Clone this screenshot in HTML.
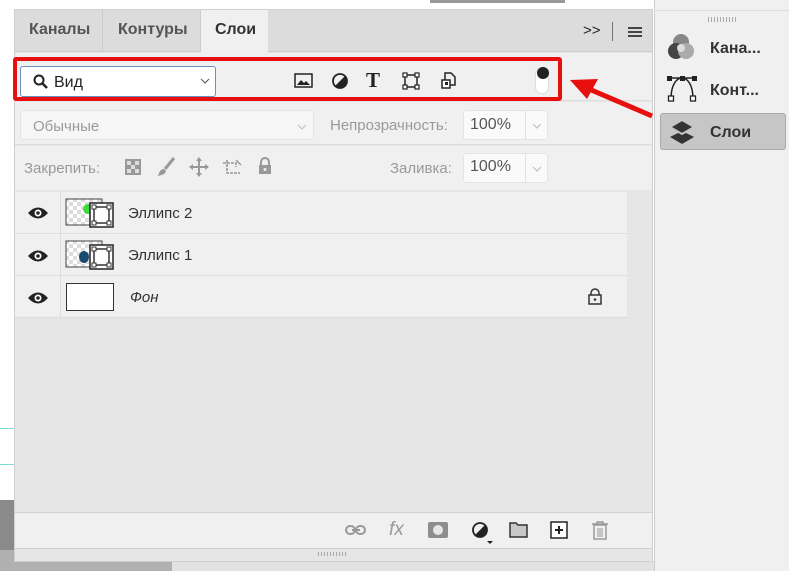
<!DOCTYPE html>
<html><head><meta charset="utf-8"><style>
*{margin:0;padding:0;box-sizing:border-box}
body{width:789px;height:571px;overflow:hidden;background:#fff;font-family:"Liberation Sans",sans-serif;position:relative}
.a{position:absolute}
.t{font-size:15px;color:#333}
.g{color:#9a9a9a;font-size:15px}
</style></head><body>
<div class="a" style="left:0;top:500px;width:14px;height:50px;background:#8a8a8a"></div>
<div class="a" style="left:0;top:550px;width:14px;height:21px;background:#b0b0b0"></div>
<div class="a" style="left:0;top:561px;width:172px;height:10px;background:#b0b0b0"></div>
<div class="a" style="left:172px;top:561px;width:482px;height:10px;background:#e2e2e2"></div>
<div class="a" style="left:0;top:428px;width:14px;height:1px;background:#7dd"></div>
<div class="a" style="left:0;top:464px;width:14px;height:1px;background:#7dd"></div>
<div class="a" style="left:430px;top:0;width:135px;height:3px;background:#999"></div>
<!-- main panel -->
<div class="a" style="left:14px;top:9px;width:639px;height:553px;background:#e6e6e6;border:1px solid #cfcfcf"></div>
<div class="a" style="left:15px;top:10px;width:637px;height:42px;background:#dcdcdc;border-bottom:1px solid #ccc"></div>
<div class="a" style="left:15px;top:10px;width:88px;height:42px;border-right:1px solid #ccc"></div>
<div class="a" style="left:103px;top:10px;width:98px;height:42px;border-right:1px solid #ccc"></div>
<div class="a" style="left:201px;top:10px;width:67px;height:43px;background:#f0f0f0"></div>
<div class="a" style="left:29px;top:21px;font-size:16px;font-weight:bold;color:#555">Каналы</div>
<div class="a" style="left:118px;top:21px;font-size:16px;font-weight:bold;color:#555">Контуры</div>
<div class="a" style="left:215px;top:21px;font-size:16px;font-weight:bold;color:#333">Слои</div>
<div class="a" style="left:583px;top:22px;font-size:15px;color:#222">&gt;&gt;</div>
<div class="a" style="left:612px;top:22px;width:1px;height:19px;background:#777"></div>
<div class="a" style="left:628px;top:27px;width:14px;height:10px;border-top:2px solid #444;border-bottom:2px solid #444"><div style="margin-top:2px;height:2px;background:#444"></div></div>
<!-- toolbar -->
<div class="a" style="left:15px;top:53px;width:637px;height:48px;background:#f0f0f0;border-bottom:1px solid #ddd"></div>
<div class="a" style="left:20px;top:66px;width:196px;height:31px;background:#fff;border:1px solid #6a8fc0;border-radius:3px"></div>
<svg class="a" style="left:33px;top:74px" width="16" height="16"><circle cx="6" cy="6" r="4.5" fill="none" stroke="#222" stroke-width="2"/><path d="M9 9l5 5" stroke="#222" stroke-width="2.5"/></svg>
<div class="a t" style="left:54px;top:74px;font-size:16px;color:#222">Вид</div>
<svg class="a" style="left:200px;top:78px" width="10" height="7"><path d="M1 1l4 4 4-4" fill="none" stroke="#555"/></svg>
<svg class="a" style="left:294px;top:72px" width="20" height="18"><rect x="1" y="2" width="17" height="13" fill="none" stroke="#222" stroke-width="1.5"/><path d="M3 13l4-5 3 3 2-2 4 4z" fill="#222"/></svg>
<svg class="a" style="left:331px;top:72px" width="18" height="18"><circle cx="9" cy="9" r="7" fill="none" stroke="#222" stroke-width="1.8"/><path d="M14 4A7 7 0 0 1 4 14z" fill="#222"/></svg>
<div class="a" style="left:366px;top:68px;font-size:21px;font-weight:bold;color:#222;font-family:'Liberation Serif',serif">T</div>
<svg class="a" style="left:402px;top:72px" width="18" height="18"><rect x="3" y="3" width="12" height="12" fill="none" stroke="#222" stroke-width="1.5"/><g fill="#fff" stroke="#222" stroke-width="1.2"><rect x="1" y="1" width="4" height="4"/><rect x="13" y="1" width="4" height="4"/><rect x="1" y="13" width="4" height="4"/><rect x="13" y="13" width="4" height="4"/></g></svg>
<svg class="a" style="left:440px;top:71px" width="18" height="20"><path d="M5 2h6l4 4v8H5z" fill="none" stroke="#222" stroke-width="1.5"/><rect x="2" y="9" width="8" height="8" fill="#fff" stroke="#222" stroke-width="1.5"/><rect x="5" y="11" width="3" height="3" fill="#222"/></svg>
<div class="a" style="left:535px;top:67px;width:14px;height:27px;border-radius:7px;background:#fff;border:1px solid #ddd"></div>
<div class="a" style="left:537px;top:67px;width:12px;height:12px;border-radius:50%;background:#222"></div>
<div class="a" style="left:13px;top:57px;width:549px;height:44px;border:4px solid #e80f0f;border-radius:3px"></div>
<!-- row2 -->
<div class="a" style="left:15px;top:102px;width:637px;height:43px;background:#f0f0f0;border-bottom:1px solid #ddd"></div>
<div class="a" style="left:20px;top:110px;width:294px;height:30px;background:#f6f6f6;border:1px solid #e4e4e4;border-radius:3px"></div>
<div class="a g" style="left:33px;top:118px">Обычные</div>
<svg class="a" style="left:297px;top:124px" width="10" height="7"><path d="M1 1l4 4 4-4" fill="none" stroke="#bbb"/></svg>
<div class="a g" style="left:330px;top:117px">Непрозрачность:</div>
<div class="a" style="left:463px;top:110px;width:85px;height:30px;background:#fafafa;border:1px solid #e4e4e4;border-radius:3px"></div>
<div class="a" style="left:525px;top:110px;width:1px;height:30px;background:#e0e0e0"></div>
<div class="a t" style="left:470px;top:116px;font-size:16px;color:#555">100%</div>
<svg class="a" style="left:532px;top:123px" width="10" height="7"><path d="M1 1l4 4 4-4" fill="none" stroke="#bbb"/></svg>
<!-- row3 -->
<div class="a" style="left:15px;top:146px;width:637px;height:44px;background:#f0f0f0"></div>
<div class="a g" style="left:24px;top:160px">Закрепить:</div>
<svg class="a" style="left:124px;top:158px" width="18" height="18"><rect x="1" y="1" width="16" height="16" fill="#999"/><g fill="#ddd"><rect x="3" y="3" width="4" height="4"/><rect x="11" y="3" width="4" height="4"/><rect x="7" y="7" width="4" height="4"/><rect x="3" y="11" width="4" height="4"/><rect x="11" y="11" width="4" height="4"/></g></svg>
<svg class="a" style="left:156px;top:156px" width="20" height="22"><path d="M18 2L9 13" stroke="#999" stroke-width="3"/><path d="M8 13c-4 0-5 4-6 7 3-1 7-1 8-5z" fill="#999"/></svg>
<svg class="a" style="left:188px;top:156px" width="22" height="22"><path d="M11 2v18M2 11h18" stroke="#999" stroke-width="2"/><path d="M11 1l-3 4h6zM11 21l-3-4h6zM1 11l4-3v6zM21 11l-4-3v6z" fill="#999"/></svg>
<svg class="a" style="left:221px;top:156px" width="22" height="22"><path d="M6 4v13h13M2 7h13v4" fill="none" stroke="#999" stroke-width="1.6" stroke-dasharray="3 1"/><path d="M15 4l5 5" stroke="#999" stroke-width="1.5"/></svg>
<svg class="a" style="left:256px;top:156px" width="18" height="20"><path d="M5 9V6a4 4 0 0 1 8 0v3" fill="none" stroke="#999" stroke-width="2"/><rect x="3" y="9" width="12" height="9" fill="#999"/><circle cx="9" cy="13.5" r="1.5" fill="#eee"/></svg>
<div class="a g" style="left:390px;top:160px">Заливка:</div>
<div class="a" style="left:463px;top:153px;width:85px;height:30px;background:#fafafa;border:1px solid #e4e4e4;border-radius:3px"></div>
<div class="a" style="left:525px;top:153px;width:1px;height:30px;background:#e0e0e0"></div>
<div class="a t" style="left:470px;top:158px;font-size:16px;color:#555">100%</div>
<svg class="a" style="left:532px;top:166px" width="10" height="7"><path d="M1 1l4 4 4-4" fill="none" stroke="#bbb"/></svg>
<!-- layers -->
<div class="a" style="left:15px;top:190px;width:637px;height:322px;background:#e6e6e6"></div>
<div class="a" style="left:15px;top:192px;width:612px;height:126px;background:#f0f0f0"></div>
<div class="a" style="left:15px;top:233px;width:612px;height:1px;background:#ddd"></div>
<div class="a" style="left:15px;top:275px;width:612px;height:1px;background:#ddd"></div>
<div class="a" style="left:15px;top:317px;width:612px;height:1px;background:#ddd"></div>
<div class="a" style="left:60px;top:192px;width:1px;height:126px;background:#ddd"></div>
<svg width="0" height="0" style="position:absolute"><defs><pattern id="ck" width="8" height="8" patternUnits="userSpaceOnUse"><rect width="8" height="8" fill="#fff"/><rect width="4" height="4" fill="#ddd"/><rect x="4" y="4" width="4" height="4" fill="#ddd"/></pattern></defs></svg>
<svg class="a" style="left:27px;top:205px" width="22" height="16"><path d="M1 8Q11-3 21 8Q11 19 1 8z" fill="#222"/><circle cx="11" cy="8" r="3.5" fill="#fff"/><circle cx="11" cy="8" r="1.8" fill="#222"/></svg>
<svg class="a" style="left:27px;top:248px" width="22" height="16"><path d="M1 8Q11-3 21 8Q11 19 1 8z" fill="#222"/><circle cx="11" cy="8" r="3.5" fill="#fff"/><circle cx="11" cy="8" r="1.8" fill="#222"/></svg>
<svg class="a" style="left:27px;top:290px" width="22" height="16"><path d="M1 8Q11-3 21 8Q11 19 1 8z" fill="#222"/><circle cx="11" cy="8" r="3.5" fill="#fff"/><circle cx="11" cy="8" r="1.8" fill="#222"/></svg>
<svg class="a" style="left:65px;top:198px" width="50" height="30"><rect x="1" y="1" width="36" height="26" fill="url(#ck)" stroke="#444"/><circle cx="23" cy="11" r="5" fill="#3ddc3d"/><rect x="25" y="5" width="23" height="24" fill="#fff" stroke="#222" stroke-width="1.5"/><rect x="29" y="9" width="15" height="16" fill="none" stroke="#333" stroke-width="1.5"/><g fill="#fff" stroke="#333"><rect x="27" y="7" width="4" height="4"/><rect x="42" y="7" width="4" height="4"/><rect x="27" y="23" width="4" height="4"/><rect x="42" y="23" width="4" height="4"/></g></svg>
<svg class="a" style="left:65px;top:240px" width="50" height="30"><rect x="1" y="1" width="36" height="26" fill="url(#ck)" stroke="#444"/><ellipse cx="19" cy="17" rx="5" ry="6" fill="#1a4a6e"/><rect x="25" y="5" width="23" height="24" fill="#fff" stroke="#222" stroke-width="1.5"/><rect x="29" y="9" width="15" height="16" fill="none" stroke="#333" stroke-width="1.5"/><g fill="#fff" stroke="#333"><rect x="27" y="7" width="4" height="4"/><rect x="42" y="7" width="4" height="4"/><rect x="27" y="23" width="4" height="4"/><rect x="42" y="23" width="4" height="4"/></g></svg>
<div class="a" style="left:66px;top:283px;width:48px;height:28px;background:#fff;border:1px solid #333"></div>
<div class="a t" style="left:128px;top:205px">Эллипс 2</div>
<div class="a t" style="left:128px;top:247px">Эллипс 1</div>
<div class="a t" style="left:130px;top:289px;font-style:italic">Фон</div>
<svg class="a" style="left:587px;top:287px" width="16" height="18"><path d="M4 8V6a4 4 0 0 1 8 0v2" fill="none" stroke="#333" stroke-width="1.5"/><rect x="2" y="8" width="12" height="9" fill="none" stroke="#333" stroke-width="1.5"/><circle cx="8" cy="12.5" r="1.3" fill="#333"/></svg>
<!-- bottom bar -->
<div class="a" style="left:15px;top:512px;width:637px;height:37px;background:#f0f0f0;border-top:1px solid #d0d0d0;border-bottom:1px solid #d0d0d0"></div>
<svg class="a" style="left:344px;top:522px" width="24" height="16"><rect x="2" y="4" width="9" height="8" rx="4" fill="none" stroke="#999" stroke-width="2"/><rect x="12" y="4" width="9" height="8" rx="4" fill="none" stroke="#999" stroke-width="2"/><path d="M8 8h8" stroke="#999" stroke-width="2"/></svg>
<div class="a" style="left:389px;top:519px;font-size:19px;font-style:italic;color:#999">fx</div>
<div class="a" style="left:428px;top:522px;width:20px;height:16px;background:#8d8d8d;border-radius:2px"><div style="margin:3px auto;width:10px;height:10px;border-radius:50%;background:#e6e6e6"></div></div>
<svg class="a" style="left:471px;top:521px" width="24" height="24"><circle cx="9" cy="9" r="7" fill="none" stroke="#222" stroke-width="1.8"/><path d="M14 4A7 7 0 0 1 4 14z" fill="#222"/><path d="M16 20h6l-3 3z" fill="#222"/></svg>
<svg class="a" style="left:509px;top:521px" width="20" height="18"><path d="M1 2h6l2 2h9v12H1z" fill="#c8c8c8" stroke="#333" stroke-width="1.5"/></svg>
<svg class="a" style="left:550px;top:521px" width="18" height="18"><rect x="1" y="1" width="16" height="16" fill="#fff" stroke="#222" stroke-width="1.5"/><path d="M9 5v8M5 9h8" stroke="#222" stroke-width="2"/></svg>
<svg class="a" style="left:591px;top:520px" width="18" height="21"><path d="M1 4h16M6 4V2h6v2" fill="none" stroke="#999" stroke-width="1.5"/><rect x="3" y="5" width="12" height="14" fill="none" stroke="#999" stroke-width="1.5"/><path d="M7 8v9M9 8v9M11 8v9" stroke="#999"/></svg>
<div class="a" style="left:318px;top:552px;width:30px;height:4px;background:repeating-linear-gradient(90deg,#aaa 0 1px,transparent 1px 3px)"></div>
<!-- right panel -->
<div class="a" style="left:654px;top:0;width:135px;height:571px;background:#f0f0f0;border-left:1px solid #ccc"></div>
<div class="a" style="left:654px;top:10px;width:135px;height:1px;background:#ddd"></div>
<div class="a" style="left:708px;top:17px;width:28px;height:5px;background:repeating-linear-gradient(90deg,#aaa 0 1px,transparent 1px 3px)"></div>
<svg class="a" style="left:667px;top:33px" width="28" height="28"><circle cx="14" cy="9" r="8" fill="#888"/><circle cx="9" cy="18" r="8" fill="#444"/><circle cx="19" cy="18" r="8" fill="#aaa"/><circle cx="14" cy="15" r="4" fill="#ddd"/></svg>
<div class="a" style="left:710px;top:40px;font-size:16px;font-weight:bold;color:#333">Кана...</div>
<svg class="a" style="left:665px;top:74px" width="34" height="28"><path d="M5 4h26" stroke="#222" stroke-width="1.5"/><path d="M6 25C6 10 12 4 17 4s11 6 11 21" fill="none" stroke="#222" stroke-width="1.5"/><g fill="#222"><rect x="2" y="2" width="5" height="5"/><rect x="27" y="2" width="5" height="5"/><rect x="15" y="2" width="5" height="5"/></g><g fill="#fff" stroke="#222" stroke-width="1.3"><rect x="3.5" y="22" width="5" height="5"/><rect x="25.5" y="22" width="5" height="5"/></g></svg>
<div class="a" style="left:710px;top:82px;font-size:16px;font-weight:bold;color:#333">Конт...</div>
<div class="a" style="left:660px;top:113px;width:126px;height:37px;background:#c6c6c6;border:1px solid #aaa;border-radius:3px"></div>
<svg class="a" style="left:668px;top:118px" width="28" height="28"><path d="M14 13L2 19l12 7 12-7z" fill="#333"/><path d="M14 2L2 9l12 7 12-7z" fill="#333" stroke="#c6c6c6" stroke-width="2"/></svg>
<div class="a" style="left:710px;top:124px;font-size:16px;font-weight:bold;color:#333">Слои</div>
<!-- arrow -->
<svg class="a" style="left:560px;top:70px" width="100" height="60"><path d="M92 46L22 16" stroke="#e80f0f" stroke-width="5"/><path d="M10 10l28-1-11 20z" fill="#e80f0f"/></svg>
</body></html>
